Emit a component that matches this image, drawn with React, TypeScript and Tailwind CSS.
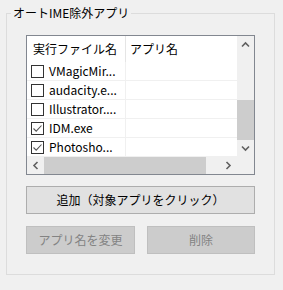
const font = { fontFamily: '"Noto Sans CJK JP", "Noto Sans", sans-serif' };

type Row = { name: string; checked: boolean };

const rows: Row[] = [
  { name: "VMagicMir...", checked: false },
  { name: "audacity.e...", checked: false },
  { name: "Illustrator....", checked: false },
  { name: "IDM.exe", checked: true },
  { name: "Photosho...", checked: true },
];

function Chevron({ dir }: { dir: "up" | "down" | "left" | "right" }) {
  const rot = { up: 0, right: 90, down: 180, left: 270 }[dir];
  return (
    <svg width="9" height="9" viewBox="0 0 9 9" style={{ transform: `rotate(${rot}deg)` }}>
      <path d="M1 6.5 L4.5 3 L8 6.5" fill="none" stroke="#606060" strokeWidth="1.6" />
    </svg>
  );
}

function Checkbox({ checked }: { checked: boolean }) {
  return (
    <div className="flex h-[13px] w-[13px] shrink-0 items-center justify-center border border-[#333333] bg-white">
      {checked && (
        <svg width="11" height="11" viewBox="0 0 11 11">
          <path d="M1.5 5.5 L4.2 8.2 L9.5 2.5" fill="none" stroke="#555555" strokeWidth="1.1" />
        </svg>
      )}
    </div>
  );
}

function AppList() {
  return (
    <div className="flex h-[140px] w-[229px] border border-[#828790] bg-white">
      <div className="flex w-[210px] flex-col">
        <div className="flex h-[26px] text-[12px] text-black">
          <div className="flex w-[99px] items-center border-r border-[#e5e5e5] pl-[6px]">実行ファイル名</div>
          <div className="flex flex-1 items-center pl-[4px]">アプリ名</div>
        </div>
        {rows.map((r) => (
          <div key={r.name} className="flex h-[19px] border-b border-[#f0f0f0] text-[12px] text-black">
            <div className="flex w-[99px] items-center gap-[5px] overflow-hidden border-r border-[#f0f0f0] pl-[4px] whitespace-nowrap">
              <Checkbox checked={r.checked} />
              <span>{r.name}</span>
            </div>
            <div className="flex-1" />
          </div>
        ))}
        <div className="flex h-[17px] bg-[#f0f0f0]">
          <div className="flex w-[17px] items-center justify-center">
            <Chevron dir="left" />
          </div>
          <div className="flex flex-1 items-stretch">
            <div className="w-[162px] bg-[#cdcdcd]" />
          </div>
          <div className="flex w-[17px] items-center justify-center">
            <Chevron dir="right" />
          </div>
        </div>
      </div>
      <div className="flex w-[17px] flex-col bg-[#f0f0f0]">
        <div className="flex h-[17px] items-center justify-center">
          <Chevron dir="up" />
        </div>
        <div className="flex flex-1 flex-col justify-end">
          <div className="h-[40px] bg-[#cdcdcd]" />
        </div>
        <div className="flex h-[17px] items-center justify-center">
          <Chevron dir="down" />
        </div>
        <div className="h-[17px]" />
      </div>
    </div>
  );
}

export default function App() {
  return (
    <div className="h-[290px] w-[283px] bg-[#f0f0f0] pl-[6px] pt-[5px]" style={font}>
      <fieldset className="h-[270px] w-[269px] border border-[#dcdcdc] px-[19px] pt-[14px]">
        <legend className="-ml-[15px] px-[2px] text-[12px] leading-[16px] text-black">オートIME除外アプリ</legend>
        <AppList />
        <button className="mt-[11px] h-[28px] w-[229px] border border-[#adadad] bg-[#e1e1e1] text-[12px] text-black">
          追加（対象アプリをクリック）
        </button>
        <div className="mt-[12px] flex gap-[12px]">
          <button disabled className="h-[28px] w-[109px] border border-[#bfbfbf] bg-[#cccccc] text-[12px] text-[#838383]">
            アプリ名を変更
          </button>
          <button disabled className="h-[28px] w-[108px] border border-[#bfbfbf] bg-[#cccccc] text-[12px] text-[#838383]">
            削除
          </button>
        </div>
      </fieldset>
    </div>
  );
}
